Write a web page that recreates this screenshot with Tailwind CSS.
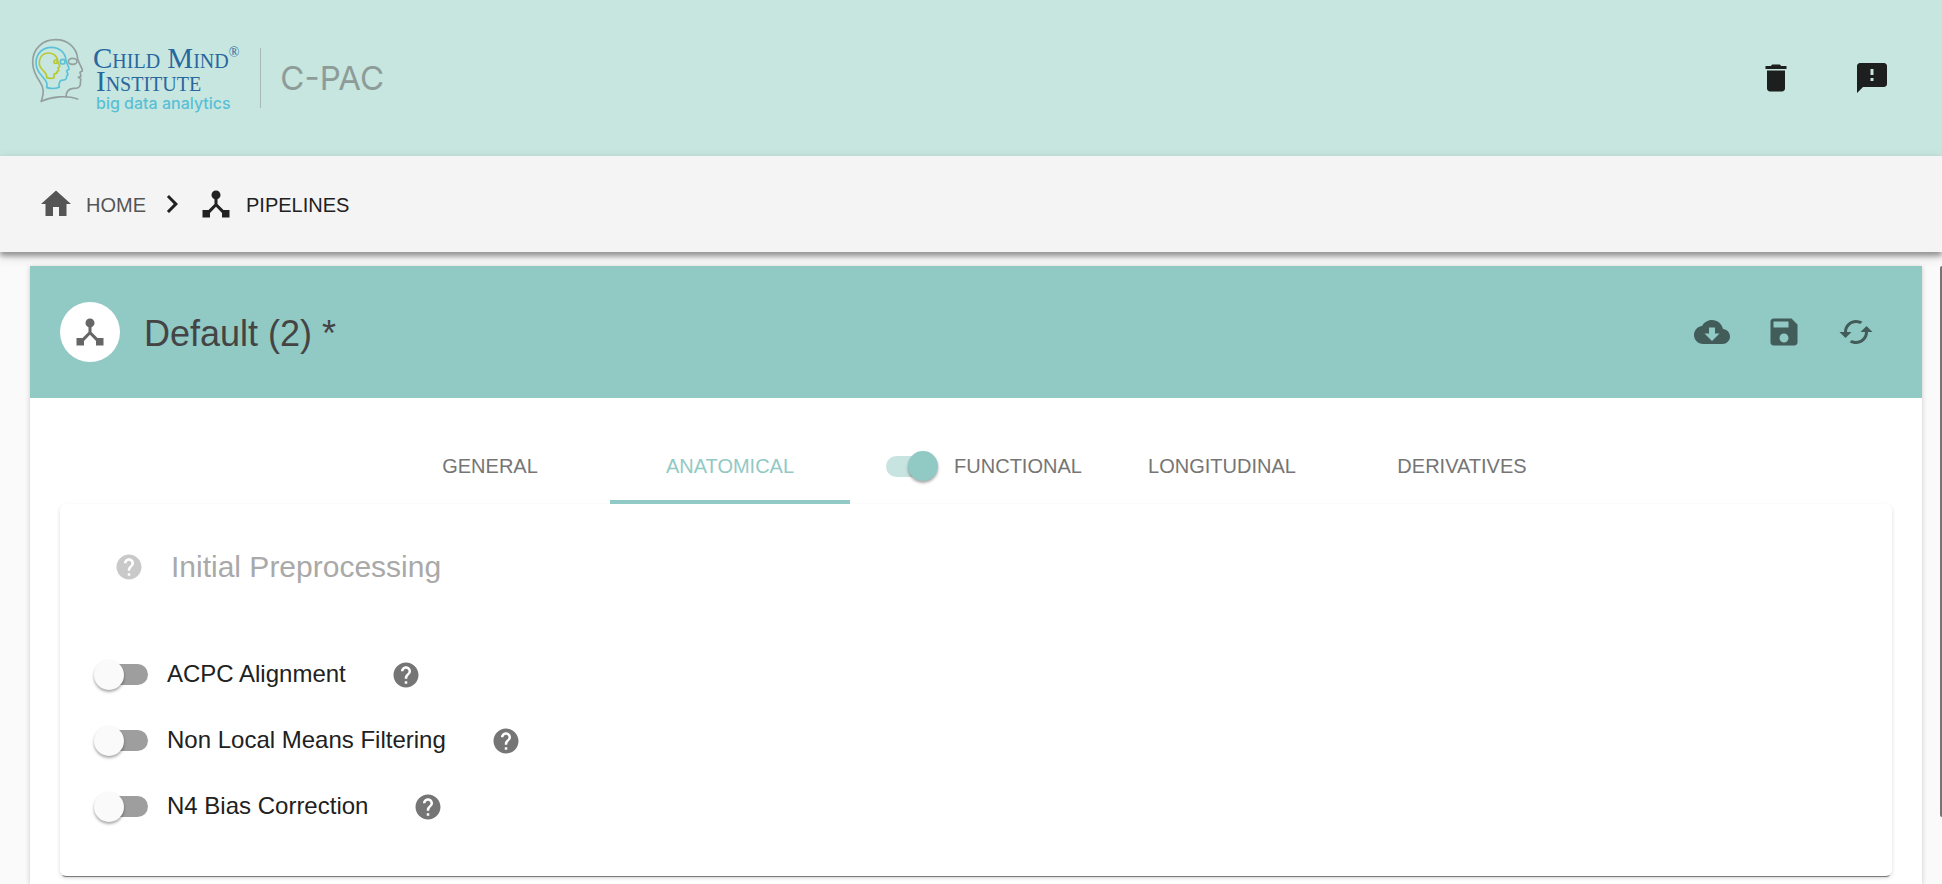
<!DOCTYPE html>
<html lang="en">
<head>
<meta charset="utf-8">
<meta name="viewport" content="width=device-width, initial-scale=1">
<title>C-PAC</title>
<script src="https://cdn.jsdelivr.net/npm/@tailwindcss/browser@4"></script>
</head>
<body class="bg-[#fafafa] text-[#212121] font-['Liberation_Sans',Arial,sans-serif]">
<svg class="hidden" aria-hidden="true">
  <symbol id="hub" viewBox="0 0 24 24"><path d="M17 16l-4-4V8.82C14.16 8.4 15 7.3 15 6c0-1.66-1.34-3-3-3S9 4.34 9 6c0 1.3.84 2.4 2 2.82V12l-4 4H3v5h5v-3.05l4-4.2 4 4.2V21h5v-5h-4z"/></symbol>
  <symbol id="help" viewBox="0 0 24 24"><path d="M12 2C6.48 2 2 6.48 2 12s4.48 10 10 10 10-4.48 10-10S17.52 2 12 2zm1 17h-2v-2h2v2zm2.07-7.75l-.9.92C13.45 12.9 13 13.5 13 15h-2v-.5c0-1.1.45-2.1 1.17-2.83l1.24-1.26c.37-.36.59-.86.59-1.41 0-1.1-.9-2-2-2s-2 .9-2 2H8c0-2.21 1.79-4 4-4s4 1.79 4 4c0 .88-.36 1.68-.93 2.25z"/></symbol>
</svg>
<div class="flex min-h-screen flex-col overflow-hidden">
  <header class="flex h-[156px] items-center justify-between bg-[#c7e6df] pl-[30px] pr-[52px]">
    <div class="flex items-center">
      <a href="#" class="flex items-center" aria-label="Child Mind Institute big data analytics">
        <svg class="mb-4 h-[68px] w-[57px]" viewBox="30 30 171 204" fill="none" stroke-width="5" stroke-linejoin="round" stroke-linecap="round">
          <g stroke="#949f9f">
            <path d="M64 226C72 200 72 186 60 168C46 148 38 130 38 108C38 68 68 41 107 41C142 41 170 64 173 98C175 112 188 125 187 135L180 139L183 151L175 154L182 158C183 165 180 170 181 176C178 186 172 187 160 187C146 188 138 196 138 213"/>
            <path d="M64 226C95 212 140 207 173 219"/>
            <ellipse cx="158" cy="106" rx="13" ry="9"/>
          </g>
          <g stroke="#5cc1d8">
            <path d="M80 185C84 170 78 165 66 150C54 138 48 125 48 108C50 80 70 64 94 64C118 64 136 80 138 103C140 115 148 122 147 130L140 134L144 146L140 150C141 160 136 163 124 163C117 166 116 178 118 184C105 189 92 188 80 185Z"/>
            <circle cx="128" cy="107" r="7"/>
          </g>
          <g stroke="#b8c832">
            <path d="M80 155C82 145 76 140 68 132C58 122 57 115 58 106C60 90 72 81 86 81C102 81 112 92 113 105C114 112 120 118 119 122L114 126L116 134L112 136C112 142 108 144 102 144L102 155C95 158 87 157 80 155Z"/>
            <circle cx="107" cy="107" r="5"/>
          </g>
        </svg>
        <span class="flex flex-col pl-[6px] pt-1 text-[#28689f]">
          <span class="flex font-['Liberation_Serif',serif] text-[29px] leading-[23px] [font-variant:small-caps]">Child Mind<span class="text-[14px] leading-3">®</span></span>
          <span class="pl-[3px] font-['Liberation_Serif',serif] text-[29px] leading-[23px] [font-variant:small-caps]">Institute</span>
          <span class="pl-[3px] font-[Inter,sans-serif] text-base font-medium leading-[20px] text-[#5abfd6]">big data analytics</span>
        </span>
      </a>
      <span class="ml-[21px] h-[60px] w-px bg-[#a6b9b5]"></span>
      <span class="pl-[19px] font-[Inter,sans-serif] text-[33px] leading-[36px] text-[#8e9c99]">C-PAC</span>
    </div>
    <div class="flex items-center gap-[60px] text-[#1c1f1e]">
      <button type="button" aria-label="Delete"><svg class="size-9" viewBox="0 0 24 24" fill="currentColor"><path d="M6 19c0 1.1.9 2 2 2h8c1.1 0 2-.9 2-2V7H6v12zM19 4h-3.500l-1-1h-5l-1 1H5v2h14V4z"/></svg></button>
      <button type="button" aria-label="Feedback"><svg class="size-9" viewBox="0 0 24 24" fill="currentColor"><path d="M20 2H4c-1.1 0-1.990.9-1.990 2L2 22l4-4h14c1.1 0 2-.9 2-2V4c0-1.1-.9-2-2-2zm-7 12h-2v-2h2v2zm0-4h-2V6h2v4z"/></svg></button>
    </div>
  </header>

  <nav aria-label="Breadcrumb" class="relative flex h-24 items-center bg-[#f4f4f4] pl-[38px] text-[20px] leading-6 shadow-[0_4px_5px_rgba(0,0,0,0.34),0_4px_12px_rgba(0,0,0,0.14)]">
    <a href="#" class="flex items-center gap-3 text-[#555555]">
      <svg class="size-9" viewBox="0 0 24 24" fill="currentColor"><path d="M10 20v-6h4v6h5v-8h3L12 3 2 12h3v8z"/></svg><span class="pt-[2px]">HOME</span>
    </a>
    <svg class="mx-2 size-9" viewBox="0 0 24 24" fill="currentColor"><path d="M10 6L8.590 7.410 13.170 12l-4.580 4.590L10 18l6-6z"/></svg>
    <a href="#" class="flex items-center gap-3" aria-current="page">
      <svg class="size-9" fill="currentColor"><use href="#hub"/></svg><span class="pt-[2px]">PIPELINES</span>
    </a>
  </nav>

  <main class="flex flex-1 flex-col pl-[30px] pr-5 pt-[14px]">
    <section class="flex flex-1 flex-col bg-white shadow-[0_1px_5px_rgba(0,0,0,0.2)]">
      <div class="flex items-center justify-between bg-[#91c9c4] py-9 pl-[30px] pr-12">
        <div class="flex items-center gap-6">
          <span class="flex size-[60px] items-center justify-center rounded-full bg-white text-[#666666]"><svg class="size-9" fill="currentColor"><use href="#hub"/></svg></span>
          <h1 class="pt-[3px] text-[36px] leading-10 text-[#444444]">Default (2) *</h1>
        </div>
        <div class="flex items-center gap-9 text-[#425c59]">
          <button type="button" aria-label="Download"><svg class="size-9" viewBox="0 0 24 24" fill="currentColor"><path d="M19.350 10.040C18.670 6.590 15.640 4 12 4 9.110 4 6.600 5.640 5.350 8.040 2.340 8.360 0 10.910 0 14c0 3.310 2.690 6 6 6h13c2.760 0 5-2.240 5-5 0-2.640-2.050-4.780-4.650-4.960zM17 13l-5 5-5-5h3V9h4v4h3z"/></svg></button>
          <button type="button" aria-label="Save"><svg class="size-9" viewBox="0 0 24 24" fill="currentColor"><path d="M17 3H5c-1.110 0-2 .9-2 2v14c0 1.100.890 2 2 2h14c1.100 0 2-.9 2-2V7l-4-4zm-5 16c-1.660 0-3-1.340-3-3s1.340-3 3-3 3 1.340 3 3-1.340 3-3 3zm3-10H5V5h10v4z"/></svg></button>
          <button type="button" aria-label="Reload"><svg class="size-9" viewBox="0 0 24 24" fill="currentColor"><path d="M19 8l-4 4h3c0 3.310-2.690 6-6 6-1.010 0-1.970-.250-2.800-.700l-1.460 1.460C8.970 19.540 10.430 20 12 20c4.420 0 8-3.580 8-8h3l-4-4zM6 12c0-3.310 2.690-6 6-6 1.010 0 1.970.250 2.800.700l1.460-1.460C15.030 4.460 13.570 4 12 4c-4.420 0-8 3.580-8 8H1l4 4 4-4H6z"/></svg></button>
        </div>
      </div>

      <div class="px-[30px] pb-2 pt-[34px]">
        <div role="tablist" class="flex h-[72px] justify-center text-[20px] leading-6 text-[#757575]">
          <button type="button" role="tab" class="w-60 border-b-4 border-transparent">GENERAL</button>
          <button type="button" role="tab" aria-selected="true" class="w-60 border-b-4 border-[#91c9c4] text-[#91c9c4]">ANATOMICAL</button>
          <div class="flex w-[252px] items-center justify-center gap-[17px] border-b-4 border-transparent pl-4">
            <input type="checkbox" checked aria-label="Enable functional" class="relative h-[21px] w-[51px] appearance-none rounded-full bg-[#c8e4e1] before:absolute before:-top-[5px] before:left-[22px] before:size-[30px] before:rounded-full before:bg-[#91c9c4] before:shadow-[0_2px_3px_rgba(0,0,0,0.35)]">
            <button type="button" role="tab">FUNCTIONAL</button>
          </div>
          <button type="button" role="tab" class="w-60 border-b-4 border-transparent">LONGITUDINAL</button>
          <button type="button" role="tab" class="w-60 border-b-4 border-transparent">DERIVATIVES</button>
        </div>

        <div role="tabpanel" class="rounded-md bg-white pb-[37px] pl-[37px] pt-[45px] shadow-[0_3px_1px_-2px_rgba(0,0,0,0.5),0_2px_4px_rgba(0,0,0,0.14)]">
          <div class="flex items-center gap-[27px] pl-[17px]">
            <button type="button" aria-label="Help" class="text-[#c9c9c9]"><svg class="size-[30px]" fill="currentColor"><use href="#help"/></svg></button>
            <h2 class="text-[30px] leading-9 text-[#a9a9a9]">Initial Preprocessing</h2>
          </div>
          <div class="pt-14 text-[24px] leading-7">
            <div class="flex h-[66px] items-center">
              <input id="acpc" type="checkbox" class="relative h-[21px] w-[51px] appearance-none rounded-full bg-[#9e9e9e] before:absolute before:-left-[3px] before:-top-1 before:size-[30px] before:rounded-full before:bg-[#fafafa] before:shadow-[0_2px_3px_rgba(0,0,0,0.35)]">
              <label for="acpc" class="pl-[19px]">ACPC Alignment</label>
              <button type="button" aria-label="Help" class="ml-[45px] pt-[2px] text-[#757575]"><svg class="size-[30px]" fill="currentColor"><use href="#help"/></svg></button>
            </div>
            <div class="flex h-[66px] items-center">
              <input id="nlm" type="checkbox" class="relative h-[21px] w-[51px] appearance-none rounded-full bg-[#9e9e9e] before:absolute before:-left-[3px] before:-top-1 before:size-[30px] before:rounded-full before:bg-[#fafafa] before:shadow-[0_2px_3px_rgba(0,0,0,0.35)]">
              <label for="nlm" class="pl-[19px]">Non Local Means Filtering</label>
              <button type="button" aria-label="Help" class="ml-[45px] pt-[2px] text-[#757575]"><svg class="size-[30px]" fill="currentColor"><use href="#help"/></svg></button>
            </div>
            <div class="flex h-[66px] items-center">
              <input id="n4" type="checkbox" class="relative h-[21px] w-[51px] appearance-none rounded-full bg-[#9e9e9e] before:absolute before:-left-[3px] before:-top-1 before:size-[30px] before:rounded-full before:bg-[#fafafa] before:shadow-[0_2px_3px_rgba(0,0,0,0.35)]">
              <label for="n4" class="pl-[19px]">N4 Bias Correction</label>
              <button type="button" aria-label="Help" class="ml-[45px] pt-[2px] text-[#757575]"><svg class="size-[30px]" fill="currentColor"><use href="#help"/></svg></button>
            </div>
          </div>
        </div>
      </div>
    </section>
  </main>
</div>
<div class="absolute right-0 top-[266px] h-[551px] w-[2px] rounded-l-full bg-[#757575]" aria-hidden="true"></div>
</body>
</html>
